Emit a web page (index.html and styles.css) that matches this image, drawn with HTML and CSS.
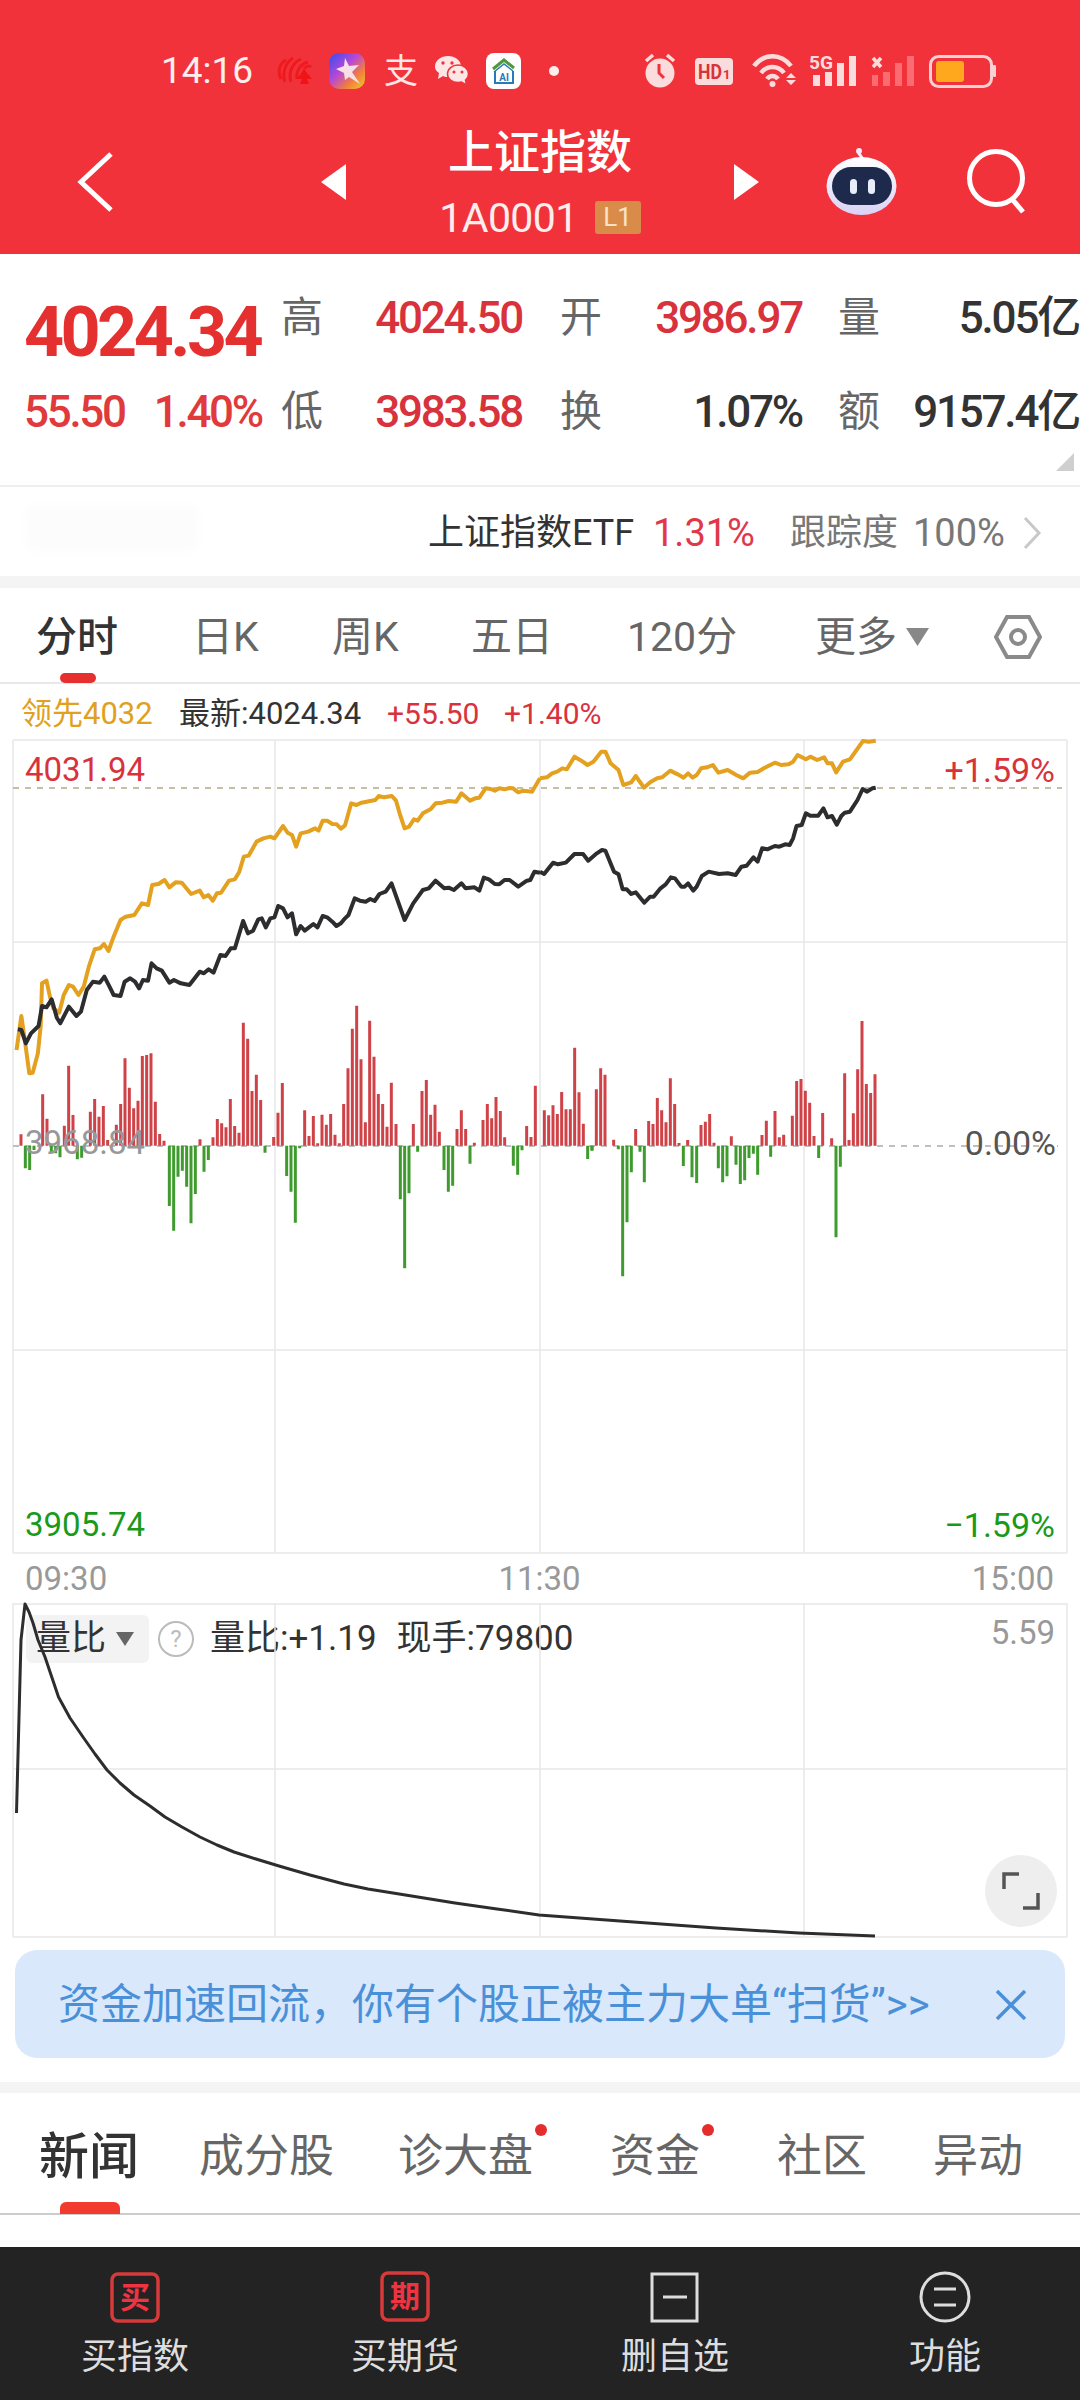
FILE: index.html
```html
<!DOCTYPE html>
<html lang="zh-CN">
<head>
<meta charset="utf-8">
<title>上证指数</title>
<link rel="stylesheet" href="styles.css">
</head>
<body>
<div class="page">
  <header class="header">
    <div class="status">
      <span class="clock">14:16</span>
      <svg width="52" height="40" viewBox="0 0 52 40"><g class="shell"><path d="M4 28C0 20 3 12 9 9"/><path d="M8 31C5 22 8 12 16 7"/><path d="M14 31C11 22 15 12 24 8"/><path d="M20 28C19 20 23 13 31 11"/><path d="M27 18C29 15 32 14 34 16"/></g><path class="shell-spade" d="M27 18l8 10h-5l2 5h-9l2-5h-5z"/></svg>
      <svg width="55" height="40" viewBox="0 0 55 40"><defs><linearGradient id="starbg" x1="0" y1="0" x2="1" y2="1"><stop offset="0" stop-color="#2f4df5"/><stop offset=".42" stop-color="#b548d6"/><stop offset=".72" stop-color="#f5803a"/><stop offset="1" stop-color="#e8d02a"/></linearGradient></defs><rect y="2" width="36" height="36" rx="10" fill="url(#starbg)"/><path d="M16 7l4 8 10-1-7 7 8 12-11-7-4 3-1-7-8-4 8-3z" fill="#f6dfe6"/></svg>
      <span class="zhi">支</span>
      <svg width="52" height="40" viewBox="0 0 52 40"><path class="wx" d="M14 5c7 0 13 4.500 13 10.500S21 26 14 26c-2 0-3 0-5-1l-5 3 1-6C2 20 1 18 1 15.500 1 9.500 7 5 14 5z"/><path class="wx wx-back" d="M24 14c6 0 10.500 4 10.500 9 0 2.500-1 4.500-3 6l1 5-5-3c-1 .500-2 .500-3.500 .500-6 0-10.500-3.500-10.500-8.500s4.500-9 10.500-9z"/><circle class="wx-eye" cx="9" cy="12" r="1.700"/><circle class="wx-eye" cx="18" cy="12" r="1.700"/><circle class="wx-eye" cx="20" cy="21" r="1.500"/><circle class="wx-eye" cx="28" cy="21" r="1.500"/></svg>
      <svg width="63" height="40" viewBox="0 0 63 40"><rect y="2" width="35" height="36" rx="8" fill="#fff"/><path d="M7 18L18 9l10 8" fill="none" stroke="#4d9a3d" stroke-width="3"/><path d="M8 21l10-8 9 7" fill="none" stroke="#2a79b8" stroke-width="1.500"/><path d="M9 20v12h18V20" fill="none" stroke="#2a79b8" stroke-width="2"/><text class="ai-t" x="18" y="30" text-anchor="middle">AI</text></svg>
      <i class="status-dot"></i>
      <svg width="51" height="40" viewBox="0 0 51 40"><circle class="pale" cx="16" cy="22" r="14.500"/><path class="pale-line" d="M2 10l7-6M30 10l-7-6"/><path class="alarm-hand" d="M15 13v9l5 5"/></svg>
      <svg width="57" height="40" viewBox="0 0 57 40"><rect class="pale" y="7" width="38" height="27" rx="4"/><text class="hd-t" x="3" y="28" textLength="24" lengthAdjust="spacingAndGlyphs">HD</text><text class="hd-s" x="28" y="28">1</text></svg>
      <svg width="58" height="40" viewBox="0 0 58 40"><path class="wifi" d="M2 15C12 2 29 2 39 15"/><path class="wifi" d="M9 22C15 14 26 14 32 22"/><path class="wifi" d="M15 28C18 24 23 24 26 28"/><circle class="pale" cx="20.500" cy="33" r="3"/><path class="pale" d="M39 22l5 5H34zM34 29h10l-5 5z"/></svg>
      <svg width="60" height="40" viewBox="0 0 60 40"><text class="fiveg" x="-1" y="18" textLength="24" lengthAdjust="spacingAndGlyphs">5G</text><path class="pale" d="M3 24h7v11H3zM15 21h7v14h-7zM27 12h7v23h-7zM39 5h7v30h-7z"/></svg>
      <svg width="59" height="40" viewBox="0 0 59 40"><path class="pale-x" d="M3 7l8 9M11 7l-8 9"/><path class="faint" d="M2 24h6v11H2zM13 21h7v14h-7zM25 12h7v23h-7zM37 5h7v30h-7z"/></svg>
      <svg width="67" height="40" viewBox="0 0 67 40"><rect class="batt" x="1.500" y="5.500" width="61" height="30" rx="8"/><rect x="64" y="14" width="3" height="12" rx="1" fill="#fbd0d2"/><rect x="7" y="10" width="28" height="21" rx="3" fill="#ffa81e"/></svg>
    </div>
    <div class="navbar">
      <svg class="back" width="36" height="60" viewBox="0 0 36 60"><path d="M34 2L4 30l30 28"/></svg>
      <i class="tri tri-l"></i>
      <div class="title-block">
        <div class="title">上证指数</div>
        <div class="subtitle"><span class="code">1A0001</span><span class="l1">L1</span></div>
      </div>
      <i class="tri tri-r"></i>
      <svg class="robot" width="71" height="68" viewBox="0 0 71 68"><defs><linearGradient id="robotbg" x1="0" y1="0" x2="0" y2="1"><stop offset="0" stop-color="#ffffff"/><stop offset="1" stop-color="#d9d2f5"/></linearGradient></defs><path d="M36 10c-1-3-5-4-3-8" fill="none" stroke="#efeaf8" stroke-width="3"/><circle cx="33" cy="3" r="3" fill="#efeaf8"/><ellipse cx="35.500" cy="38" rx="35" ry="29" fill="url(#robotbg)"/><rect x="6" y="19" width="60" height="38" rx="19" fill="#1d2a4c"/><rect x="24" y="31" width="7" height="15" rx="3.500" fill="#e9ecf9"/><rect x="42" y="31" width="7" height="15" rx="3.500" fill="#e9ecf9"/></svg>
      <svg class="search" width="62" height="66" viewBox="0 0 62 66"><circle cx="29" cy="29" r="26.500"/><path d="M45 50l11 13"/></svg>
    </div>
  </header>

  <section class="stats">
    <div class="price">4024.34</div>
    <div class="lab">高</div><div class="val up pad1">4024.50</div>
    <div class="lab">开</div><div class="val up pad2">3986.97</div>
    <div class="lab">量</div><div class="val dark">5.05亿</div>
    <div class="change"><span>55.50</span><span>1.40%</span></div>
    <div class="lab">低</div><div class="val up pad1">3983.58</div>
    <div class="lab">换</div><div class="val dark pad2">1.07%</div>
    <div class="lab">额</div><div class="val dark">9157.4亿</div>
    <i class="corner"></i>
  </section>

  <section class="etf">
    <i class="ghost"></i>
    <span class="etf-name">上证指数ETF</span>
    <span class="etf-pct">1.31%</span>
    <span class="etf-lab">跟踪度</span>
    <span class="etf-track">100%</span>
    <svg class="etf-arrow" width="22" height="34" viewBox="0 0 22 34"><path d="M3 2l14 15L3 32"/></svg>
  </section>
  <div class="band"></div>

  <nav class="chart-tabs">
    <span class="ct active">分时</span>
    <span class="ct">日K</span>
    <span class="ct">周K</span>
    <span class="ct">五日</span>
    <span class="ct">120分</span>
    <span class="ct more">更多<i class="more-tri"></i></span>
    <svg class="hex" width="48" height="46" viewBox="0 0 48 46"><path d="M13 3h22l11 20-11 20H13L2 23z"/><circle cx="24" cy="23" r="7"/></svg>
    <i class="ct-ind"></i>
  </nav>

  <div class="legend">
    <span class="gold">领先4032</span>
    <span class="latest">最新:4024.34</span>
    <span class="up">+55.50</span>
    <span class="up">+1.40%</span>
  </div>

  <section class="main-chart">
    <svg class="main-svg" width="1080" height="813" viewBox="0 740 1080 813">
      <path class="grid" d="M13 740V1553M275 740V1553M540 740V1553M804 740V1553M1067 740V1553M13 740H1067M13 942H1067M13 1350H1067M13 1553H1067"/>
      <path class="dash-top" d="M13 788H1062"/>
      <path class="dash-zero" d="M13 1146H1058"/>
      <g transform="translate(10,1000) scale(.33333)">
        <path class="bar-red" d="M33 437V403M98 437V283M111 437V356M163 437V377M176 437V197M189 437V345M241 437V335M254 437V297M267 437V350M280 437V318M293 437V420M319 437V374M332 437V312M345 437V175M358 437V263M371 437V325M384 437V302M397 437V168M410 437V165M423 437V160M436 437V305M449 437V402M462 437V422M570 437V418M609 437V412M622 437V357M635 437V370M648 437V382M661 437V297M674 437V378M687 437V398M700 437V68M713 437V116M726 437V273M739 437V224M752 437V300M791 437V411M804 437V338M817 437V249"/>
        <path class="bar-green" d="M46 437V505M59 437V510M72 437V450M124 437V460M137 437V460M150 437V472M202 437V478M215 437V473M478 437V618M491 437V692M504 437V530M517 437V512M530 437V560M543 437V670M556 437V582M582 437V515M595 437V480M765 437V458M830 437V528M843 437V575M856 437V668M869 437V445"/>
      </g>
      <g transform="translate(300,1000) scale(.33333)">
        <path class="bar-red" d="M14 437V331M27 437V408M40 437V348M53 437V430M66 437V344M79 437V374M92 437V342M105 437V404M118 437V430M131 437V312M144 437V205M157 437V86M170 437V17M183 437V178M196 437V367M209 437V62M222 437V170M235 437V282M248 437V312M261 437V380M274 437V248M288 437V372M340 437V372M366 437V273M379 437V240M392 437V344M405 437V314M418 437V395M471 437V387M484 437V331M497 437V387M523 437V428M549 437V360M562 437V312M575 437V355M588 437V291M601 437V333M614 437V412M680 437V378M693 437V411M706 437V257M733 437V331M746 437V346M759 437V316M772 437V342M785 437V276M798 437V328M811 437V328M824 437V143M837 437V277M850 437V371"/>
        <path class="bar-green" d="M301 437V598M314 437V805M327 437V580M353 437V455M432 437V510M445 437V575M458 437V557M510 437V491M640 437V497M653 437V524M666 437V451M863 437V477M876 437V451"/>
      </g>
      <g transform="translate(590,1000) scale(.33333)">
        <path class="bar-red" d="M19 437V268M32 437V205M45 437V224M71 437V419M137 437V387M176 437V363M189 437V372M202 437V294M215 437V331M228 437V367M241 437V235M254 437V312M267 437V429M293 437V420M333 437V375M346 437V365M359 437V342M372 437V428M424 437V409M516 437V405M529 437V362M555 437V333M568 437V412M581 437V404M607 437V347M620 437V243M633 437V237M646 437V272M659 437V308M672 437V408M698 437V339M725 437V415M764 437V220M777 437V420M790 437V340M803 437V208M816 437V63M829 437V252M842 437V279M855 437V223"/>
        <path class="bar-green" d="M6 437V452M85 437V448M98 437V829M111 437V667M124 437V517M150 437V455M163 437V547M280 437V498M306 437V532M320 437V549M385 437V505M398 437V547M411 437V529M438 437V494M451 437V552M464 437V541M477 437V474M490 437V461M503 437V524M542 437V470M686 437V474M738 437V712M751 437V500"/>
      </g>
      <g transform="translate(0,720) scale(.34435,.33333)">
        <polyline class="gold-line" points="48,990 62,888 72,960 85,1060 95,1058 110,1000 118,920 122,790 135,782 145,830 155,865 172,878 185,825 200,795 212,800 228,825 243,800 258,740 275,688 290,685 302,672 315,693 330,650 350,600 365,590 390,585 412,550 430,555 442,495 460,492 478,480 492,502 510,487 528,488 555,522 580,512 592,532 605,525 618,542 630,520 642,518 665,482 682,478 695,455 708,410 722,407 745,365 765,355 785,350 797,355 822,318 835,338 848,345 860,380 873,340 895,335 915,325 925,332 937,302 950,302 965,312 978,313 990,326 1002,316 1020,250 1035,255 1050,248 1075,243 1090,240 1100,228 1115,232 1138,228 1150,242 1162,285 1175,325 1188,320 1202,298 1213,302 1228,280 1250,268 1265,250 1285,248 1303,243 1325,245 1340,220 1365,242 1380,235 1392,233 1410,205 1425,207 1437,212 1450,205 1465,208 1480,204 1490,205 1505,217 1520,212 1545,215 1568,175"/>
        <polyline class="black-line" points="52,928 62,930 75,970 90,940 112,918 122,858 135,862 150,838 165,893 175,910 200,860 222,888 235,875 252,810 270,785 290,788 303,770 318,800 330,825 350,828 362,785 378,775 392,785 404,805 415,780 430,782 440,730 455,745 470,752 492,788 505,780 525,790 550,795 580,755 592,760 606,748 620,758 640,705 655,708 670,685 682,685 706,603 720,640 735,632 750,598 760,595 772,622 785,595 797,592 808,558 822,565 835,592 848,580 860,643 873,618 885,632 910,612 922,622 937,588 950,592 965,605 977,618 990,610 1002,595 1012,585 1030,535 1045,542 1062,545 1075,537 1088,543 1102,522 1120,515 1137,490 1175,600 1200,550 1228,510 1245,505 1265,482 1290,505 1303,503 1318,510 1340,490 1352,505 1378,502 1392,512 1405,473 1420,478 1437,492 1450,493 1465,480 1480,480 1505,500 1530,482 1540,480 1552,455 1568,458"/>
      </g>
      <g transform="translate(540,720) scale(.34435,.33333)">
        <polyline class="gold-line" points="0,175 20,172 35,160 50,155 65,145 78,148 100,110 120,122 138,135 155,125 178,95 190,95 205,130 228,150 242,195 265,187 278,168 302,203 320,187 340,175 355,172 378,152 400,163 417,173 430,160 443,173 455,165 468,145 485,142 502,135 518,158 545,150 570,165 590,175 610,158 632,156 650,145 682,128 700,135 722,133 735,125 748,105 772,118 785,110 805,120 825,112 835,130 848,130 860,157 880,125 900,118 938,63 955,65 975,62"/>
        <polyline class="black-line" points="0,455 12,462 38,428 52,433 75,428 100,402 125,402 140,422 165,400 180,390 190,392 215,455 228,463 240,508 252,508 265,522 278,517 303,548 320,530 330,530 350,505 365,493 380,472 392,475 410,500 420,500 430,490 445,512 455,500 470,468 490,455 520,462 545,460 568,465 585,440 600,437 620,412 632,425 645,385 660,388 682,378 695,380 712,373 725,375 735,355 745,318 760,315 772,280 785,287 808,287 823,265 835,292 848,288 862,314 875,288 885,278 900,275 922,240 937,207 950,215 965,205 975,203"/>
      </g>
    </svg>
    <span class="axis-label up top-l">4031.94</span>
    <span class="axis-label up top-r">+1.59%</span>
    <span class="axis-label muted mid-l">3968.84</span>
    <span class="axis-label mid-r">0.00%</span>
    <span class="axis-label down bot-l">3905.74</span>
    <span class="axis-label down bot-r">−1.59%</span>
  </section>

  <div class="times"><span>09:30</span><span>11:30</span><span>15:00</span></div>

  <section class="sub-chart">
    <div class="sub-legend">
      <span class="chip">量比<i class="chip-tri"></i></span>
      <span class="help">?</span>
      <span class="sub-val">量比:+1.19</span>
      <span class="sub-val">现手:79800</span>
    </div>
    <svg class="sub-svg" width="1080" height="335" viewBox="0 1603 1080 335">
      <path class="grid" d="M13 1603V1937M275 1603V1937M540 1603V1937M804 1603V1937M1067 1603V1937M13 1604H1067M13 1769H1067M13 1937H1067"/>
      <polyline class="ratio" points="16.500,1813 21,1640 25,1604 29,1612 33,1623 38,1640 45,1657 58.500,1697 70,1718 83,1737 95,1754 107,1770 120,1783 134,1795 150,1806 165,1817 182,1827 200,1837 217,1845 234,1852 256,1859 279,1866 310,1875 344,1884 368,1889 393,1893 424,1898 455,1903 497,1909 539,1915 620,1921 716,1928 799,1933 875,1936"/>
    </svg>
    <span class="sub-max">5.59</span>
    <button class="expand"><svg width="38" height="38" viewBox="0 0 38 38"><path d="M2 17V2h15M36 21v15H21"/></svg></button>
  </section>

  <aside class="banner">
    <span class="banner-text">资金加速回流，你有个股正被主力大单“扫货”&gt;&gt;</span>
    <svg class="banner-x" width="30" height="30" viewBox="0 0 30 30"><path d="M1 1l28 28M29 1L1 29"/></svg>
  </aside>
  <div class="band band-b"></div>

  <nav class="news-tabs">
    <span class="nt active">新闻</span>
    <span class="nt">成分股</span>
    <span class="nt">诊大盘<i class="nt-dot"></i></span>
    <span class="nt">资金<i class="nt-dot"></i></span>
    <span class="nt">社区</span>
    <span class="nt">异动</span>
    <i class="nt-ind"></i>
  </nav>
  <div class="news-empty"></div>

  <footer class="bottom">
    <div class="bi">
      <svg width="52" height="52" viewBox="0 0 52 52"><rect class="box-red" x="3" y="3" width="46" height="47" rx="6"/><text class="box-t" x="26" y="37" text-anchor="middle">买</text></svg>
      <span class="bl">买指数</span>
    </div>
    <div class="bi">
      <svg width="52" height="52" viewBox="0 0 52 52"><rect class="box-red" x="3" y="2" width="46" height="47" rx="6"/><text class="box-t" x="26" y="36" text-anchor="middle">期</text></svg>
      <span class="bl">买期货</span>
    </div>
    <div class="bi">
      <svg width="52" height="52" viewBox="0 0 52 52"><rect class="box-w" x="3" y="3" width="45" height="47"/><path class="box-w" d="M14 26h24"/></svg>
      <span class="bl">删自选</span>
    </div>
    <div class="bi">
      <svg width="52" height="52" viewBox="0 0 52 52"><circle class="box-w" cx="26" cy="26" r="24"/><path class="box-w" d="M15 18h22M15 34h22"/></svg>
      <span class="bl">功能</span>
    </div>
  </footer>
</div>
</body>
</html>
```
FILE: styles.css
```css
* { box-sizing: border-box; }
html, body { margin: 0; padding: 0; background: #fff; }
body { font-family: Roboto, "Noto Sans CJK SC", sans-serif; color: #333; }
i { display: block; font-style: normal; }
svg { display: block; flex: none; }
.page { width: 1080px; height: 2400px; overflow: hidden; display: flex; flex-direction: column; }

/* Header */
.header { height: 254px; background: #f2323b; color: #fff; flex: none; }
.status { height: 91px; padding: 51px 0 0 161px; display: flex; align-items: center; }
.clock { width: 116px; font-size: 37px; line-height: 40px; color: #fdeeee; }
.shell path { fill: none; stroke: #ee1a1e; stroke-width: 3; }
.shell-spade { fill: #ee1418; }
.zhi { width: 50px; font-size: 34px; line-height: 40px; color: #fde6e6; }
.wx { fill: #fde6e6; }
.wx-back { stroke: #f2323b; stroke-width: 1.5; }
.wx-eye { fill: #f2323b; }
.ai-t { font: 700 10px Roboto, sans-serif; fill: #2a79b8; }
.status-dot { width: 10px; height: 10px; border-radius: 50%; background: #fdeeee; margin: 0 85px 0 0; }
.pale { fill: #fbdcdc; }
.pale-line { stroke: #fbdcdc; stroke-width: 3.5; fill: none; }
.pale-x { stroke: #fbdcdc; stroke-width: 3.5; fill: none; }
.alarm-hand { stroke: #f2323b; stroke-width: 3; fill: none; }
.hd-t { font: 700 21px Roboto, sans-serif; fill: #d8323a; }
.hd-s { font: 700 13px Roboto, sans-serif; fill: #d8323a; }
.wifi { fill: none; stroke: #fbdcdc; stroke-width: 4.5; }
.fiveg { font: 700 19px Roboto, sans-serif; fill: #fbdcdc; }
.faint { fill: #fa6b72; }
.batt { fill: none; stroke: #fbd0d2; stroke-width: 3; }

.navbar { height: 163px; padding: 18px 0 0 77px; display: flex; align-items: center; }
.back path { fill: none; stroke: #fff; stroke-width: 5; }
.tri { width: 0; height: 0; border-top: 18px solid transparent; border-bottom: 18px solid transparent; }
.tri-l { margin-left: 208px; border-right: 25px solid #fff; }
.tri-r { border-left: 25px solid #fff; }
.title-block { width: 388px; text-align: center; }
.title { font-size: 46px; line-height: 56px; color: #fff; font-weight: 500; }
.subtitle { margin-top: 16px; height: 44px; display: flex; justify-content: center; align-items: center; gap: 17px; font-size: 41px; line-height: 44px; color: #fdeeee; }
.code { letter-spacing: -.6px; }
.l1 { width: 46px; height: 33px; background: #d98c4a; color: #f8e2c9; border-radius: 3px; font-size: 26px; line-height: 33px; text-align: center; }
.robot { margin-left: 67px; }
.search { margin-left: 70px; }
.search circle, .search path { fill: none; stroke: #fff; stroke-width: 5; }

/* Stats */
.stats { position: relative; height: 231px; flex: none; padding: 17px 0 0 24px; display: grid; grid-template-columns: 257px 42px 237px 43px 235px 43px 198px; grid-template-rows: 94px 94px; align-items: center; }
.price { align-self: start; margin-top: 28px; font-size: 70px; line-height: 66px; font-weight: 700; color: #e4302f; letter-spacing: -3.600px; white-space: nowrap; }
.change { display: flex; gap: 29px; font-size: 44px; font-weight: 500; color: #e03a3c; letter-spacing: -2.300px; white-space: nowrap; }
.lab { font-size: 42px; line-height: 56px; color: #666; }
.val { font-size: 44px; line-height: 56px; font-weight: 500; text-align: right; letter-spacing: -2.200px; white-space: nowrap; }
.pad1 { padding-right: 38px; }
.pad2 { padding-right: 36px; }
.up { color: #d8323c; }
.dark { color: #333; }
.corner { position: absolute; left: 1056px; top: 199px; width: 18px; height: 18px; background: #cfcfcf; clip-path: polygon(100% 0, 100% 100%, 0 100%); }

/* ETF */
.etf { position: relative; height: 91px; flex: none; border-top: 2px solid #eee; padding: 2px 0 0 428px; display: flex; align-items: center; font-size: 36px; line-height: 50px; }
.ghost { position: absolute; left: 27px; top: 20px; width: 170px; height: 44px; background: #fcfcfc; filter: blur(4px); }
.etf-name { color: #333; width: 225px; }
.etf-pct { color: #e0384a; width: 137px; font-size: 38px; }
.etf-lab { color: #777; width: 123px; }
.etf-track { color: #777; width: 109px; font-size: 38px; }
.etf-arrow path { fill: none; stroke: #c8c8c8; stroke-width: 3; }
.band { height: 12px; flex: none; background: #f4f4f4; }
.band-b { height: 11px; margin-top: 24px; }

/* Chart tabs */
.chart-tabs { position: relative; height: 96px; flex: none; padding: 4px 0 0 36px; border-bottom: 2px solid #e8e8e8; display: grid; grid-template-columns: 156px 140px 139px 156px 188px 179px auto; align-items: center; font-size: 41px; line-height: 50px; color: #666; }
.ct.active { color: #333; font-weight: 500; }
.more { display: flex; align-items: center; gap: 9px; }
.more-tri { width: 23px; height: 18px; background: #888; clip-path: polygon(0 0, 100% 0, 50% 100%); }
.hex path, .hex circle { fill: none; stroke: #8a8a8a; stroke-width: 4; }
.ct-ind { position: absolute; left: 60px; bottom: -1px; width: 36px; height: 10px; border-radius: 5px; background: #e5302f; }

.legend { height: 56px; flex: none; padding: 7px 0 3px 21px; display: flex; align-items: center; font-size: 31px; line-height: 40px; }
.gold { color: #e0a020; width: 158px; }
.latest { color: #333; width: 208px; }
.legend .up { width: 117px; font-size: 30px; }

/* Main chart */
.main-chart { position: relative; height: 813px; flex: none; }
.main-svg, .sub-svg { position: absolute; left: 0; top: 0; overflow: visible; }
.grid { fill: none; stroke: #e8e8e8; stroke-width: 1.5; }
.dash-top { stroke: #b5a98c; stroke-width: 1.5; stroke-dasharray: 6 6; }
.dash-zero { stroke: #aaa; stroke-width: 1.5; stroke-dasharray: 6 6; }
.bar-red { fill: none; stroke: #cf4348; stroke-width: 9; }
.bar-green { fill: none; stroke: #3f9b2e; stroke-width: 9; }
.gold-line, .black-line { fill: none; stroke-width: 4; stroke-linejoin: round; vector-effect: non-scaling-stroke; }
.gold-line { stroke: #e3a11f; }
.black-line { stroke: #2d2d2f; }
.axis-label { position: absolute; font-size: 33px; line-height: 40px; white-space: nowrap; }
.top-r, .mid-r, .bot-r { font-size: 34px; }
.muted { color: #98989b; }
.down { color: #1a9a1a; }
.top-l { left: 25px; top: 10px; }
.top-r { right: 25px; top: 10px; }
.mid-l { left: 25px; top: 383px; }
.mid-r { right: 24px; top: 383px; color: #555; }
.bot-l { left: 25px; top: 765px; }
.bot-r { right: 25px; top: 765px; }

.times { height: 50px; flex: none; padding: 2px 26px 0 25px; display: flex; justify-content: space-between; align-items: center; font-size: 33px; line-height: 40px; color: #999; }

/* Sub chart */
.sub-chart { position: relative; height: 334px; flex: none; }
.sub-legend { position: absolute; left: 26px; top: 11px; display: flex; align-items: center; font-size: 35px; line-height: 50px; color: #333; }
.chip { width: 123px; height: 48px; padding-left: 10px; background: #f3f3f3; border-radius: 6px; display: flex; align-items: center; gap: 10px; }
.chip-tri { width: 18px; height: 14px; background: #666; clip-path: polygon(0 0, 100% 0, 50% 100%); }
.help { width: 36px; height: 36px; margin: 0 16px 0 9px; border: 2px solid #bbb; border-radius: 50%; color: #bbb; font-size: 24px; line-height: 32px; text-align: center; }
.sub-val { margin-right: 20px; white-space: nowrap; }
.ratio { fill: none; stroke: #2d2d2f; stroke-width: 3; stroke-linejoin: round; }
.sub-max { position: absolute; right: 25px; top: 10px; font-size: 33px; line-height: 40px; color: #999; }
.expand { position: absolute; left: 985px; top: 252px; width: 72px; height: 72px; padding: 0; border: 0; border-radius: 50%; background: #eee; display: flex; align-items: center; justify-content: center; }
.expand path { fill: none; stroke: #555; stroke-width: 3.5; }

/* Banner */
.banner { margin: 13px 15px 0; height: 108px; flex: none; border-radius: 22px; background: #d9e8fb; padding: 2px 39px 0 43px; display: flex; align-items: center; justify-content: space-between; }
.banner-text { font-size: 42px; line-height: 56px; color: #4a90d9; white-space: nowrap; }
.banner-x path { fill: none; stroke: #4a90d9; stroke-width: 3.5; }

/* News tabs */
.news-tabs { position: relative; height: 122px; flex: none; padding: 8px 0 0 39px; border-bottom: 2px solid #ccc; display: grid; grid-template-columns: 160px 199px 212px 167px 156px auto; align-items: center; font-size: 45px; line-height: 60px; color: #666; }
.nt { position: relative; white-space: nowrap; justify-self: start; }
.nt.active { font-size: 50px; color: #333; font-weight: 500; }
.nt-dot { position: absolute; right: -14px; top: -3px; width: 12px; height: 12px; border-radius: 50%; background: #e52d2d; }
.nt-ind { position: absolute; left: 60px; bottom: -1px; width: 60px; height: 12px; border-radius: 6px 6px 0 0; background: #f23a2f; }
.news-empty { height: 32px; flex: none; }

/* Bottom bar */
.bottom { height: 153px; flex: none; background: #232323; padding-top: 24px; display: grid; grid-template-columns: repeat(4, 270px); }
.bi { display: flex; flex-direction: column; align-items: center; }
.bl { margin-top: 11px; font-size: 36px; line-height: 46px; color: #ddd; }
.box-red { fill: none; stroke: #d63a3a; stroke-width: 3.5; }
.box-t { font: 700 30px "Noto Sans CJK SC", sans-serif; fill: #ef3340; }
.box-w { fill: none; stroke: #ddd; stroke-width: 3; }
```
